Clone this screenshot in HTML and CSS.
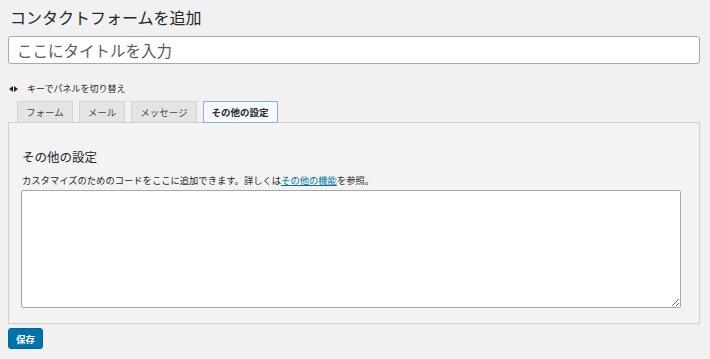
FILE: index.html
```html
<!DOCTYPE html>
<html lang="ja">
<head>
    <meta charset="UTF-8">
    <title>コンタクトフォームを追加</title>
    <link rel="stylesheet" href="styles.css">
</head>
<body>
    <div class="wrap">
        <h1 class="page-title">コンタクトフォームを追加</h1>
        <input class="title-input" type="text" placeholder="ここにタイトルを入力">

        <!-- キーボード操作の案内 -->
        <p class="keys-hint">
            <svg class="arrows" width="9" height="6" viewBox="0 0 9 6">
                <polygon points="0,3 4,0 4,6" fill="#23282d"/>
                <polygon points="9,3 5,0 5,6" fill="#23282d"/>
            </svg>
            キーでパネルを切り替え
        </p>

        <div class="tabs">
            <span class="tab">フォーム</span>
            <span class="tab">メール</span>
            <span class="tab">メッセージ</span>
            <span class="tab active">その他の設定</span>
        </div>

        <div class="panel">
            <h2 class="panel-title">その他の設定</h2>
            <p class="panel-desc">カスタマイズのためのコードをここに追加できます。詳しくは<a href="#">その他の機能</a>を参照。</p>
            <textarea class="code-box"></textarea>
        </div>

        <button class="save">保存</button>
    </div>
</body>
</html>
```

FILE: styles.css
```css
body {
    margin: 0;
    background: #f1f1f1;
    font-family: "Noto Sans CJK JP", "Noto Sans", sans-serif;
    color: #23282d;
}

.wrap {
    padding: 6px 10px 0 8px;
}

.page-title {
    margin: 0;
    padding-left: 2px;
    font-size: 16px;
    line-height: 22px;
    font-weight: 400;
}

.title-input {
    display: block;
    box-sizing: border-box;
    width: 692px;
    height: 28px;
    margin-top: 8px;
    padding: 0 8px;
    border: 1px solid #a8a8a8;
    border-radius: 3px;
    background: #fff;
    font-family: inherit;
    font-size: 15.5px;
    outline: none;
}

.title-input::placeholder {
    color: #5a5a5a;
}

.keys-hint {
    display: flex;
    align-items: center;
    gap: 9px;
    margin: 18px 0 0 1px;
    font-size: 9px;
    line-height: 14px;
}

/* タブ */
.tabs {
    display: flex;
    gap: 6px;
    margin-top: 5px;
    padding-left: 9px;
    position: relative;
    z-index: 1;
}

.tab {
    box-sizing: border-box;
    height: 21px;
    padding: 0 8px;
    border: 1px solid #d4d4d4;
    border-bottom: none;
    background: #e4e4e4;
    font-size: 9.5px;
    line-height: 20px;
    color: #444;
}

.tab.active {
    height: 22px;
    border: 1px solid #7eb4e2;
    background: #f7f8fa;
    font-weight: 700;
    color: #23282d;
}

.panel {
    box-sizing: border-box;
    width: 692px;
    margin-top: -1px;
    padding: 25px 18px 15px 13px;
    border: 1px solid #cfcfcf;
    background: #f3f3f3;
}

.panel-title {
    margin: 0;
    font-size: 12.5px;
    line-height: 18px;
    font-weight: 400;
}

.panel-desc {
    margin: 7px 0 0;
    font-size: 9.3px;
    line-height: 14px;
}

.panel-desc a {
    color: #0073aa;
}

.code-box {
    display: block;
    box-sizing: border-box;
    width: 660px;
    height: 118px;
    margin: 3px 0 0 -1px;
    border: 1px solid #a8a8a8;
    border-radius: 2px;
    background: #fff;
}

.save {
    display: block;
    margin-top: 4px;
    width: 35px;
    height: 21px;
    padding: 0;
    border: 1px solid #006799;
    border-radius: 3px;
    background: #0073aa;
    color: #fff;
    font-family: inherit;
    font-size: 9.5px;
    font-weight: 700;
}
```
